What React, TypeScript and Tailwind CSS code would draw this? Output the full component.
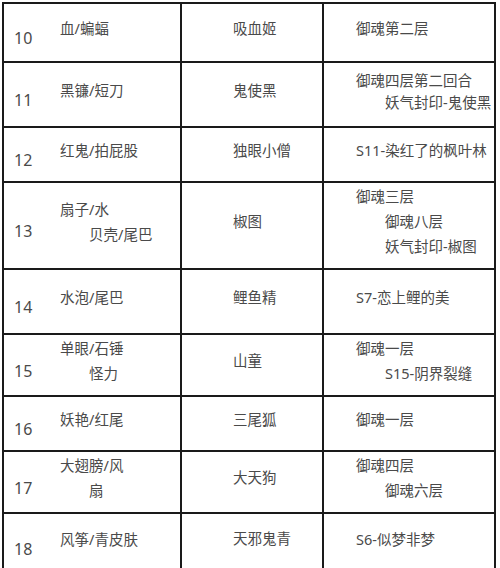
import React from "react";

type Row = {
  no: string;
  clue: string[];
  name: string;
  loc: string[];
  h: string;
  lead?: string;
};

const rows: Row[] = [
  { no: "10", clue: ["血/蝙蝠"], name: "吸血姬", loc: ["御魂第二层"], h: "h-[59px]" },
  { no: "11", clue: ["黑镰/短刀"], name: "鬼使黑", loc: ["御魂四层第二回合", "妖气封印-鬼使黑"], h: "h-[65px]", lead: "leading-[22px]" },
  { no: "12", clue: ["红鬼/拍屁股"], name: "独眼小僧", loc: ["S11-染红了的枫叶林"], h: "h-[55px]" },
  { no: "13", clue: ["扇子/水", "贝壳/尾巴"], name: "椒图", loc: ["御魂三层", "御魂八层", "妖气封印-椒图"], h: "h-[87px]" },
  { no: "14", clue: ["水泡/尾巴"], name: "鲤鱼精", loc: ["S7-恋上鲤的美"], h: "h-[65px]" },
  { no: "15", clue: ["单眼/石锤", "怪力"], name: "山童", loc: ["御魂一层", "S15-阴界裂缝"], h: "h-[62px]" },
  { no: "16", clue: ["妖艳/红尾"], name: "三尾狐", loc: ["御魂一层"], h: "h-[55px]" },
  { no: "17", clue: ["大翅膀/风", "扇"], name: "大天狗", loc: ["御魂四层", "御魂六层"], h: "h-[62px]" },
  { no: "18", clue: ["风筝/青皮肤"], name: "天邪鬼青", loc: ["S6-似梦非梦"], h: "h-[60px]" },
];

const Lines = ({ lines, lead }: { lines: string[]; lead?: string }) => (
  <div className={`flex flex-col justify-center pb-2 ${lead ?? "leading-[25px]"}`}>
    {lines.map((l, i) => (
      <div key={i} className={`whitespace-nowrap ${i > 0 ? "pl-[29px]" : ""}`}>
        {l}
      </div>
    ))}
  </div>
);

export default function App() {
  return (
    <div className="min-h-[568px] w-[500px] overflow-hidden bg-white pl-[2px] pt-[2px] font-['Noto_Sans','Noto_Sans_CJK_SC',sans-serif] text-[14.5px] text-[#4a4a4a]">
      <div className="w-[494px] border-x-2 border-t-2 border-[#1a1a1a]">
        {rows.map((r) => (
          <div key={r.no} className={`flex border-b-2 border-[#1a1a1a] ${r.h}`}>
            <div className="flex w-[178px] shrink-0 border-r-2 border-[#1a1a1a]">
              <div className="flex w-[56px] items-center pl-[10px] pt-[11px] text-[16px] text-[#4a4a4a]">{r.no}</div>
              <Lines lines={r.clue} />
            </div>
            <div className="flex w-[142px] shrink-0 items-center border-r-2 border-[#1a1a1a] pb-2 pl-[51px]">
              {r.name}
            </div>
            <div className="flex flex-1 pl-[32px]">
              <Lines lines={r.loc} lead={r.lead} />
            </div>
          </div>
        ))}
      </div>
    </div>
  );
}
